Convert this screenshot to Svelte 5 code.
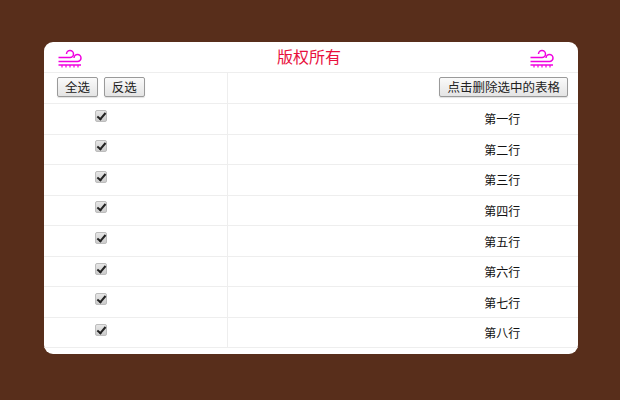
<script>
    const rows = ["第一行", "第二行", "第三行", "第四行", "第五行", "第六行", "第七行", "第八行"];
</script>

<style>
    :global(body) {
        background: #582e1b;
        font-family: "Noto Sans CJK SC", "Liberation Sans", sans-serif;
    }

    .page {
        padding: 42px 42px 46px 44px;
        height: 400px;
        box-sizing: border-box;
    }

    .card {
        background: #fff;
        border-radius: 9px;
        height: 312px;
        overflow: hidden;
    }

    .title-row {
        display: flex;
        justify-content: space-between;
        align-items: center;
        height: 31px;
        padding: 0 24px 0 14px;
        border-bottom: 1px solid #eeeeee;
        box-sizing: border-box;
    }

    .title {
        color: #e8103c;
        font-size: 16px;
        margin: 0 0 2px 6px;
    }

    .wind {
        width: 24px;
        height: 22px;
        display: block;
    }

    table {
        width: 100%;
        border-collapse: collapse;
        table-layout: fixed;
    }

    td {
        height: 30.55px;
        padding: 0;
        border-bottom: 1px solid #eeeeee;
        box-sizing: border-box;
        text-align: center;
        font-size: 12px;
        color: #111;
    }

    td:first-child {
        width: 183px;
        padding-right: 69px;
        border-right: 1px solid #eeeeee;
    }

    td:last-child {
        padding-left: 199px;
    }

    td.tools-left {
        text-align: left;
        padding: 0 0 2px 13px;
    }

    td.tools-right {
        text-align: right;
        padding: 0 10px 2px 0;
    }

    button {
        height: 20px;
        padding: 0 7px;
        margin-right: 3px;
        font-family: inherit;
        font-size: 12.5px;
        line-height: 18px;
        color: #222;
        background: linear-gradient(#fafafa, #e4e4e4);
        border: 1px solid #9a9a9a;
        border-radius: 2px;
        box-shadow: 0 1px 1px rgba(0, 0, 0, 0.12);
        vertical-align: middle;
    }

    td.tools-right button {
        margin-right: 0;
    }

    input {
        appearance: none;
        display: block;
        width: 12px;
        height: 12px;
        margin: -6px auto 0;
        position: relative;
        background: linear-gradient(#e6e6e6, #cccccc);
        border: 1px solid #bdbdbd;
        border-radius: 2px;
    }

    input:checked::after {
        content: "";
        position: absolute;
        left: 3px;
        top: 0;
        width: 3px;
        height: 7px;
        border: solid #222;
        border-width: 0 2px 2px 0;
        transform: rotate(40deg);
    }
</style>

{#snippet wind()}
    <svg class="wind" viewBox="0 0 24 22" fill="none" stroke="#f000e0" stroke-width="1.5">
        <path d="M0.5 11.5H12a3.5 3.5 0 1 0-3.5-3.5" />
        <path d="M0.5 15.5H19.5a3.5 3.5 0 1 0-3.5-3.5" />
        <path d="M0.5 19H23" />
        <path d="M4 19v2.5M8 19v2.5M12 19v2.5M16 19v2.5M20 19v2.5" stroke-width="1.2" />
    </svg>
{/snippet}

<div class="page">
    <div class="card">
        <div class="title-row">
            {@render wind()}
            <span class="title">版权所有</span>
            {@render wind()}
        </div>
        <table>
            <tbody>
                <tr>
                    <td class="tools-left">
                        <button>全选</button>
                        <button>反选</button>
                    </td>
                    <td class="tools-right"><button>点击删除选中的表格</button></td>
                </tr>
                {#each rows as row}
                    <tr>
                        <td><input type="checkbox" checked /></td>
                        <td>{row}</td>
                    </tr>
                {/each}
            </tbody>
        </table>
    </div>
</div>
